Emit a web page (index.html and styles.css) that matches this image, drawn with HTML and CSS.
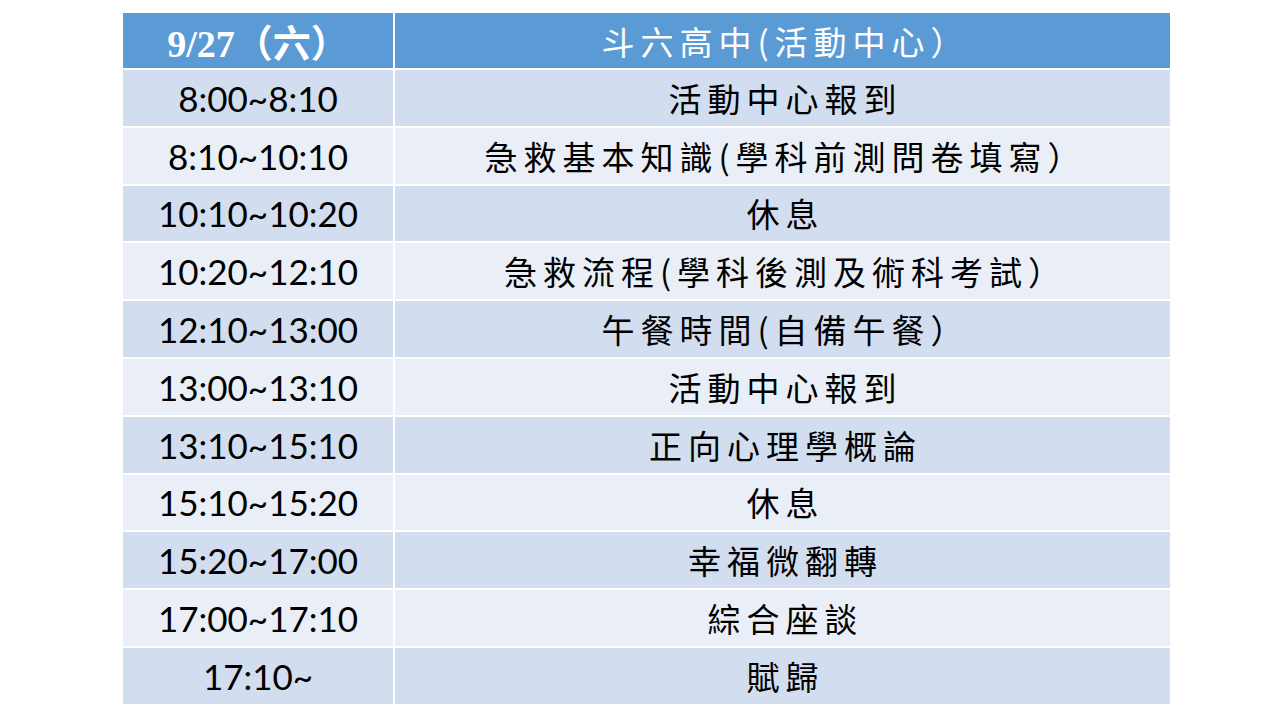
FILE: index.html
```html
<!DOCTYPE html>
<html lang="zh-Hant">
<head>
<meta charset="utf-8">
<title>9/27 課程表</title>
<link rel="stylesheet" href="styles.css">
</head>
<body>
<div class="page">
<table class="schedule">
  <thead>
    <tr>
      <th class="time head-date">9/27（六）</th>
      <th class="event head-place">斗六高中(活動中心）</th>
    </tr>
  </thead>
  <tbody>
    <tr><td class="time">8:00~8:10</td><td class="event">活動中心報到</td></tr>
    <tr><td class="time">8:10~10:10</td><td class="event">急救基本知識(學科前測問卷填寫）</td></tr>
    <tr><td class="time">10:10~10:20</td><td class="event">休息</td></tr>
    <tr><td class="time">10:20~12:10</td><td class="event">急救流程(學科後測及術科考試）</td></tr>
    <tr><td class="time">12:10~13:00</td><td class="event">午餐時間(自備午餐）</td></tr>
    <tr><td class="time">13:00~13:10</td><td class="event">活動中心報到</td></tr>
    <tr><td class="time">13:10~15:10</td><td class="event">正向心理學概論</td></tr>
    <tr><td class="time">15:10~15:20</td><td class="event">休息</td></tr>
    <tr><td class="time">15:20~17:00</td><td class="event">幸福微翻轉</td></tr>
    <tr><td class="time">17:00~17:10</td><td class="event">綜合座談</td></tr>
    <tr><td class="time">17:10~</td><td class="event">賦歸</td></tr>
  </tbody>
</table>
</div>
</body>
</html>
```

FILE: styles.css
```css
html, body {
  margin: 0;
  padding: 0;
  background: #ffffff;
}

.page {
  width: 1280px;
  height: 720px;
  padding: 11px 0 0 121px;
  box-sizing: border-box;
}

.schedule {
  border-collapse: collapse;
  table-layout: fixed;
  width: 1051px;
}

.schedule th,
.schedule td {
  border: 2px solid #ffffff;
  padding: 0;
  text-align: center;
  vertical-align: middle;
  color: #000000;
}

.schedule thead th {
  background: #5b9bd5;
  color: #ffffff;
  height: 54px;
  font-weight: normal;
}

.schedule tbody tr:nth-child(odd) td {
  background: #d2deef;
}

.schedule tbody tr:nth-child(even) td {
  background: #eaeff7;
}

.schedule tbody td {
  height: 55.8px;
}

.schedule .time {
  width: 270px;
  font-family: Lato, "Open Sans", "Liberation Sans", sans-serif;
  font-size: 35px;
}

.schedule .event {
  font-family: "Noto Sans CJK TC", "Noto Sans CJK SC", sans-serif;
  font-size: 33px;
  letter-spacing: 6px;
  font-weight: 400;
  padding-left: 6px;
}

.schedule .head-date {
  font-family: "Liberation Serif", "Noto Sans CJK TC", serif;
  font-weight: bold;
  font-size: 38px;
}

.schedule .head-place {
  font-weight: 400;
}
```
